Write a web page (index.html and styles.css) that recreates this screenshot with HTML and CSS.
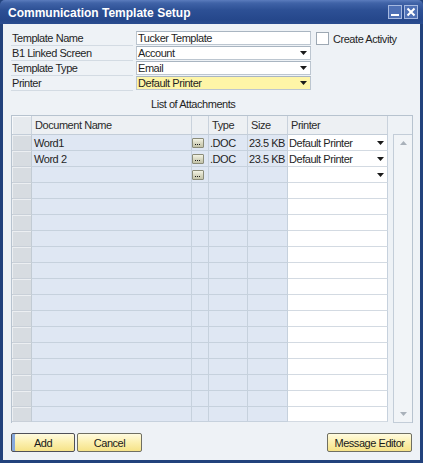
FILE: index.html
```html
<!DOCTYPE html>
<html>
<head>
<meta charset="utf-8">
<title>Communication Template Setup</title>
<link rel="stylesheet" href="styles.css">
</head>
<body>
<div class="window">
  <div class="titlebar">
    <span class="title">Communication Template Setup</span>
    <div class="tbtns">
      <span class="tbtn"><svg width="12" height="12" viewBox="0 0 12 12"><rect x="2" y="8" width="8" height="2" fill="#fff"/></svg></span>
      <span class="tbtn"><svg width="12" height="12" viewBox="0 0 12 12"><path d="M2.5 2.5L9.5 9.5M9.5 2.5L2.5 9.5" stroke="#fff" stroke-width="2" fill="none"/></svg></span>
    </div>
  </div>
  <div class="content">
    <div class="form">
      <div class="fields">
        <div class="frow"><span class="flabel">Template Name</span><span class="finput">Tucker Template</span></div>
        <div class="frow"><span class="flabel">B1 Linked Screen</span><span class="finput">Account<svg class="arr" width="7" height="4" viewBox="0 0 7 4"><path d="M0 0H7L3.5 4Z"/></svg></span></div>
        <div class="frow"><span class="flabel">Template Type</span><span class="finput">Email<svg class="arr" width="7" height="4" viewBox="0 0 7 4"><path d="M0 0H7L3.5 4Z"/></svg></span></div>
        <div class="frow"><span class="flabel">Printer</span><span class="finput yellow">Default Printer<svg class="arr" width="7" height="4" viewBox="0 0 7 4"><path d="M0 0H7L3.5 4Z"/></svg></span></div>
      </div>
      <div class="check"><span class="cbox"></span><span>Create Activity</span></div>
    </div>
    <div class="caption">List of Attachments</div>
    <div class="grid">
      <table class="tbl">
        <colgroup>
          <col class="c-rh"><col class="c-doc"><col class="c-btn"><col class="c-type"><col class="c-size"><col class="c-prn">
        </colgroup>
        <thead>
          <tr><th class="rh"></th><th>Document Name</th><th></th><th>Type</th><th>Size</th><th>Printer</th></tr>
        </thead>
        <tbody>
          <tr><td class="rh"></td><td class="b">Word1</td><td class="b bc"><span class="ell"><svg width="10" height="8" viewBox="0 0 10 8"><rect x="2" y="5" width="1" height="1"/><rect x="4" y="5" width="1" height="1"/><rect x="6" y="5" width="1" height="1"/></svg></span></td><td class="b">.DOC</td><td class="b">23.5 KB</td><td class="w"><div class="pcell"><span>Default Printer</span><svg width="7" height="4" viewBox="0 0 7 4"><path d="M0 0H7L3.5 4Z"/></svg></div></td></tr>
          <tr><td class="rh"></td><td class="b">Word 2</td><td class="b bc"><span class="ell"><svg width="10" height="8" viewBox="0 0 10 8"><rect x="2" y="5" width="1" height="1"/><rect x="4" y="5" width="1" height="1"/><rect x="6" y="5" width="1" height="1"/></svg></span></td><td class="b">.DOC</td><td class="b">23.5 KB</td><td class="w"><div class="pcell"><span>Default Printer</span><svg width="7" height="4" viewBox="0 0 7 4"><path d="M0 0H7L3.5 4Z"/></svg></div></td></tr>
          <tr><td class="rh"></td><td class="b"></td><td class="b bc"><span class="ell"><svg width="10" height="8" viewBox="0 0 10 8"><rect x="2" y="5" width="1" height="1"/><rect x="4" y="5" width="1" height="1"/><rect x="6" y="5" width="1" height="1"/></svg></span></td><td class="b"></td><td class="b"></td><td class="w"><div class="pcell"><span></span><svg width="7" height="4" viewBox="0 0 7 4"><path d="M0 0H7L3.5 4Z"/></svg></div></td></tr>
          <tr><td class="rh"></td><td class="b"></td><td class="b"></td><td class="b"></td><td class="b"></td><td class="w"></td></tr>
          <tr><td class="rh"></td><td class="b"></td><td class="b"></td><td class="b"></td><td class="b"></td><td class="w"></td></tr>
          <tr><td class="rh"></td><td class="b"></td><td class="b"></td><td class="b"></td><td class="b"></td><td class="w"></td></tr>
          <tr><td class="rh"></td><td class="b"></td><td class="b"></td><td class="b"></td><td class="b"></td><td class="w"></td></tr>
          <tr><td class="rh"></td><td class="b"></td><td class="b"></td><td class="b"></td><td class="b"></td><td class="w"></td></tr>
          <tr><td class="rh"></td><td class="b"></td><td class="b"></td><td class="b"></td><td class="b"></td><td class="w"></td></tr>
          <tr><td class="rh"></td><td class="b"></td><td class="b"></td><td class="b"></td><td class="b"></td><td class="w"></td></tr>
          <tr><td class="rh"></td><td class="b"></td><td class="b"></td><td class="b"></td><td class="b"></td><td class="w"></td></tr>
          <tr><td class="rh"></td><td class="b"></td><td class="b"></td><td class="b"></td><td class="b"></td><td class="w"></td></tr>
          <tr><td class="rh"></td><td class="b"></td><td class="b"></td><td class="b"></td><td class="b"></td><td class="w"></td></tr>
          <tr><td class="rh"></td><td class="b"></td><td class="b"></td><td class="b"></td><td class="b"></td><td class="w"></td></tr>
          <tr><td class="rh"></td><td class="b"></td><td class="b"></td><td class="b"></td><td class="b"></td><td class="w"></td></tr>
          <tr><td class="rh"></td><td class="b"></td><td class="b"></td><td class="b"></td><td class="b"></td><td class="w"></td></tr>
          <tr><td class="rh"></td><td class="b"></td><td class="b"></td><td class="b"></td><td class="b"></td><td class="w"></td></tr>
          <tr><td class="rh"></td><td class="b"></td><td class="b"></td><td class="b"></td><td class="b"></td><td class="w"></td></tr>
        </tbody>
      </table>
      <div class="spacer"></div>
      <div class="vscroll">
        <svg width="7" height="4" viewBox="0 0 7 4"><path d="M3.5 0L7 4H0Z"/></svg>
        <svg width="7" height="4" viewBox="0 0 7 4"><path d="M0 0H7L3.5 4Z"/></svg>
      </div>
    </div>
    <div class="footer">
      <span class="btn btn-add">Add</span>
      <span class="btn btn-cancel">Cancel</span>
      <span class="btn btn-msg">Message Editor</span>
    </div>
  </div>
</div>
</body>
</html>
```
FILE: styles.css
```css
html, body {
  margin: 0;
  padding: 0;
  background: #ffffff;
}
body {
  font-family: "Liberation Sans", Arial, sans-serif;
  font-size: 11px;
  letter-spacing: -0.45px;
  color: #1f1f1f;
}
.window {
  width: 423px;
  height: 463px;
  display: flex;
  flex-direction: column;
  background: #22427c;
  box-sizing: border-box;
}
.titlebar {
  height: 24px;
  flex: none;
  display: flex;
  align-items: center;
  padding: 1px 5px 0 8px;
  box-sizing: border-box;
  background: linear-gradient(#5b7cbd 0, #4063a7 3px, #2d5095 10px, #25478b 20px, #2a4c8f 24px);
  border-radius: 5px 5px 0 0;
}
.title {
  flex: 1;
  color: #ffffff;
  font-weight: bold;
  font-size: 12px;
  letter-spacing: 0;
}
.tbtns {
  display: flex;
  gap: 2px;
  margin-top: -1px;
}
.tbtn {
  width: 14px;
  height: 14px;
  box-sizing: border-box;
  border: 1px solid #a6b9e0;
  background: #4e70b5;
  display: flex;
  align-items: center;
  justify-content: center;
}
.content {
  flex: 1;
  margin: 0 3px 3px 3px;
  background: #eef2f6;
  padding: 7px 7px 0 8px;
  display: flex;
  flex-direction: column;
}
.form {
  display: flex;
  align-items: flex-start;
}
.fields {
  width: 300px;
}
.frow {
  display: flex;
  height: 15px;
}
.flabel {
  width: 122px;
  padding-left: 1px;
  box-sizing: border-box;
  border-bottom: 1px solid #d3dbe3;
  line-height: 14px;
}
.finput {
  margin-left: 3px;
  width: 175px;
  height: 14px;
  box-sizing: border-box;
  border: 1px solid #bcc6d0;
  border-top-color: #a9b5c1;
  background: #ffffff;
  display: flex;
  align-items: center;
  justify-content: space-between;
  padding: 0 3px 0 1px;
  line-height: 12px;
}
.finput.yellow {
  background: #fef5a7;
}
.arr path, .pcell path {
  fill: #1a1a1a;
}
.check {
  display: flex;
  align-items: center;
  margin-left: 5px;
  margin-top: 1px;
}
.cbox {
  width: 13px;
  height: 13px;
  box-sizing: border-box;
  border: 1px solid #9da8b3;
  background: #ffffff;
  margin-right: 4px;
}
.caption {
  margin-top: 7px;
  margin-bottom: 4px;
  padding-left: 140px;
  line-height: 13px;
}
.grid {
  display: flex;
  height: 308px;
  box-sizing: border-box;
  border: 1px solid #b7c3cf;
  border-bottom: 0;
  background: #eef2f6;
}
.tbl {
  width: 376px;
  table-layout: fixed;
  border-collapse: separate;
  border-spacing: 0;
  flex: none;
  align-self: flex-start;
}
.c-rh { width: 20px; }
.c-doc { width: 160px; }
.c-btn { width: 17px; }
.c-type { width: 39px; }
.c-size { width: 40px; }
.c-prn { width: 100px; }
.tbl th {
  height: 19px;
  box-sizing: border-box;
  padding: 0 0 0 3px;
  text-align: left;
  font-weight: normal;
  background: #edf0f3;
  border-right: 1px solid #c9d2dc;
  border-bottom: 1px solid #c3cdd8;
  color: #2a2a2a;
  white-space: nowrap;
  overflow: hidden;
}
.tbl th.rh {
  background: #e6eaee;
  box-shadow: inset 1px 1px 0 #f7f9fb;
}
.tbl td {
  height: 16px;
  box-sizing: border-box;
  padding: 0 0 0 1px;
  border-right: 1px solid #c6d1dd;
  border-bottom: 1px solid #c6d1dd;
  white-space: nowrap;
  overflow: hidden;
  line-height: 14px;
}
.tbl tr:last-child td {
  height: 15px;
}
.tbl td.rh {
  background: #d7dce1;
  box-shadow: inset 1px 1px 0 #eceff2;
  border-right-color: #c2cbd4;
  border-bottom-color: #c9d0d8;
}
.tbl td.b {
  background: #dfe7f3;
}
.tbl td.b:nth-child(2) {
  padding-left: 2px;
}
.tbl td.bc {
  padding: 0;
  vertical-align: middle;
}
.tbl td.w {
  background: #ffffff;
  border-bottom-color: #d3dae2;
}
.pcell {
  display: flex;
  align-items: center;
  justify-content: space-between;
  padding-right: 3px;
}
.ell {
  display: block;
  width: 12px;
  height: 10px;
  box-sizing: border-box;
  border: 1px solid #8b8c79;
  border-radius: 1px;
  background: linear-gradient(#f3f3e4, #d4d4bd 60%, #c4c4aa);
  overflow: hidden;
}
.ell svg {
  display: block;
}
.ell rect {
  fill: #1e1e1e;
}
.spacer {
  width: 5px;
  flex: none;
}
.vscroll {
  width: 19px;
  flex: none;
  margin-top: 18px;
  box-sizing: border-box;
  border-left: 1px solid #c3cdd8;
  border-top: 1px solid #c3cdd8;
  border-bottom: 1px solid #c3cdd8;
  background: #f1f4f7;
  display: flex;
  flex-direction: column;
  justify-content: space-between;
  align-items: center;
  padding: 6px 0 6px 0;
}
.vscroll path {
  fill: #a9b1ba;
}
.footer {
  display: flex;
  margin-top: 10px;
}
.btn {
  height: 19px;
  box-sizing: border-box;
  border: 1px solid #6f6f62;
  border-radius: 2px;
  background: linear-gradient(#fffbe0, #fcf1b3 45%, #f6e387);
  display: flex;
  align-items: center;
  justify-content: center;
  color: #1a1a1a;
}
.btn-add {
  width: 64px;
  border-color: #4f5058;
  box-shadow: inset 3px 0 0 #86a8dc;
}
.btn-cancel {
  width: 65px;
  margin-left: 2px;
}
.btn-msg {
  width: 85px;
  margin-left: auto;
  margin-right: 1px;
}
```
